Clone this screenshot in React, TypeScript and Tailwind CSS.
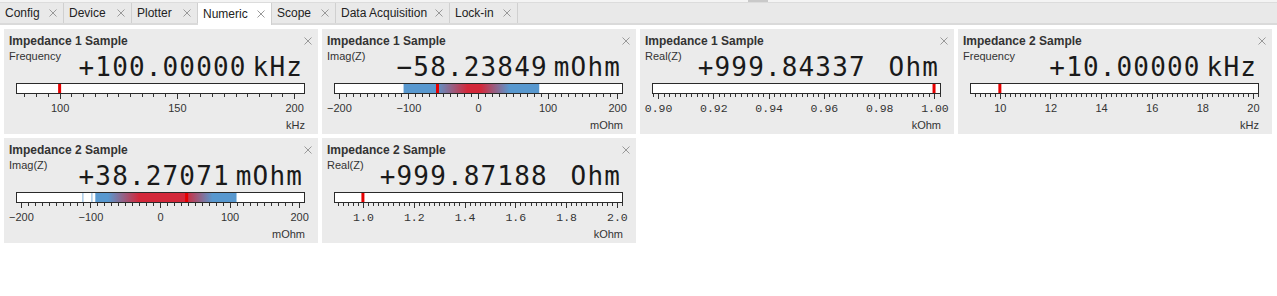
import React from 'react';

type Band = { from: number; to: number; stops: [number, string][]; ghosts?: number[] };

interface Meter {
  title: string;
  label: string;
  value: string;
  unit: string;
  scaleUnit: string;
  min: number;
  max: number;
  minor: number;
  majorEvery: number; // number of minor steps per labelled tick
  decimals: number;
  marker: number;
  mono?: boolean;
  band?: Band;
}

const BLUE = '#5898cf';
const RED = '#d3283a';

const tabs = [
  { name: 'Config', w: 'w-[64px]' },
  { name: 'Device', w: 'w-[68px]' },
  { name: 'Plotter', w: 'w-[66px]' },
  { name: 'Numeric', w: 'w-[74px]', active: true },
  { name: 'Scope', w: 'w-[64px]' },
  { name: 'Data Acquisition', w: 'w-[114px]' },
  { name: 'Lock-in', w: 'w-[68px]' },
];

const meters: Meter[] = [
  {
    title: 'Impedance 1 Sample', label: 'Frequency', value: '+100.00000', unit: 'kHz', scaleUnit: 'kHz',
    min: 81.4, max: 204.2, minor: 5, majorEvery: 10, decimals: 0, marker: 100,
  },
  {
    title: 'Impedance 1 Sample', label: 'Imag(Z)', value: '-58.23849', unit: 'mOhm', scaleUnit: 'mOhm',
    min: -207, max: 207, minor: 10, majorEvery: 10, decimals: 0, marker: -58.23849,
    band: {
      from: -107, to: 88,
      stops: [[0, BLUE], [0.24, BLUE], [0.47, RED], [0.57, RED], [0.78, BLUE], [1, BLUE]],
    },
  },
  {
    title: 'Impedance 1 Sample', label: 'Real(Z)', value: '+999.84337', unit: ' Ohm', scaleUnit: 'kOhm',
    min: 0.8978, max: 1.0020, minor: 0.002, majorEvery: 10, decimals: 2, marker: 0.99984337, mono: true,
  },
  {
    title: 'Impedance 2 Sample', label: 'Frequency', value: '+10.00000', unit: 'kHz', scaleUnit: 'kHz',
    min: 8.82, max: 20.2, minor: 0.2, majorEvery: 10, decimals: 0, marker: 10,
  },
  {
    title: 'Impedance 2 Sample', label: 'Imag(Z)', value: '+38.27071', unit: 'mOhm', scaleUnit: 'mOhm',
    min: -207, max: 207, minor: 10, majorEvery: 10, decimals: 0, marker: 38.27071,
    band: {
      from: -93, to: 110,
      stops: [[0, BLUE], [0.09, BLUE], [0.31, RED], [0.64, RED], [0.83, BLUE], [1, BLUE]],
      ghosts: [-112, -99],
    },
  },
  {
    title: 'Impedance 2 Sample', label: 'Real(Z)', value: '+999.87188', unit: ' Ohm', scaleUnit: 'kOhm',
    min: 0.886, max: 2.02, minor: 0.02, majorEvery: 10, decimals: 1, marker: 0.99987188, mono: true,
  },
];

function Cross({ size = 8, color = '#999999' }: { size?: number; color?: string }) {
  return (
    <svg width={size} height={size} viewBox="0 0 8 8" className="block shrink-0">
      <path d="M0.5 0.5 L7.5 7.5 M7.5 0.5 L0.5 7.5" stroke={color} strokeWidth="1" fill="none" />
    </svg>
  );
}

function Ruler({ m, id }: { m: Meter; id: string }) {
  const W = 289;
  const x = (v: number) => ((v - m.min) / (m.max - m.min)) * (W - 1);

  const ticks: { v: number; major: boolean }[] = [];
  const first = Math.ceil(m.min / m.minor - 1e-6);
  const last = Math.floor(m.max / m.minor + 1e-6);
  for (let i = first; i <= last; i++) {
    ticks.push({ v: i * m.minor, major: i % m.majorEvery === 0 });
  }

  const labelFont = m.mono ? "'Liberation Mono', monospace" : "'Liberation Sans', Arial, sans-serif";

  return (
    <svg width={W} height={32} className="block overflow-visible">
      {m.band && (
        <defs>
          <linearGradient id={id} x1="0" x2="1" y1="0" y2="0">
            {m.band.stops.map(([o, c], i) => (
              <stop key={i} offset={o} stopColor={c} />
            ))}
          </linearGradient>
        </defs>
      )}
      <rect x={0.5} y={0.5} width={W - 1} height={10} fill="#ffffff" stroke="#2a2a2a" />
      {m.band?.ghosts?.map((g) => (
        <rect key={g} x={x(g)} y={1} width={1.5} height={9} fill="#a9cbe8" />
      ))}
      {m.band && (
        <rect
          x={x(m.band.from)}
          y={1}
          width={x(m.band.to) - x(m.band.from)}
          height={9}
          fill={`url(#${id})`}
        />
      )}
      <rect x={x(m.marker) - 1.5} y={1} width={3} height={9} fill="#e60000" />
      {ticks.map((t, i) => {
        const tx = Math.round(x(t.v)) + 0.5;
        return <line key={i} x1={tx} x2={tx} y1={11} y2={t.major ? 16 : 14} stroke="#333" strokeWidth="1" />;
      })}
      {ticks
        .filter((t) => t.major)
        .map((t, i) => {
          const v = Math.abs(t.v) < 1e-9 ? 0 : t.v;
          const s = v.toFixed(m.decimals).replace('-', '\u2212');
          return (
            <text
              key={i}
              x={x(t.v) + 0.5}
              y={29}
              textAnchor="middle"
              fontSize={m.mono ? 11.5 : 11}
              fill="#333"
              style={{ fontFamily: labelFont }}
            >
              {s}
            </text>
          );
        })}
    </svg>
  );
}

function MeterCard({ m, idx }: { m: Meter; idx: number }) {
  return (
    <div className="h-[105px] bg-[#ebebeb] flex flex-col">
      <div className="flex items-center justify-between pl-[5px] pr-[6px] pt-[5px]">
        <span className="text-[12px] leading-[14px] font-bold text-[#333]">{m.title}</span>
        <Cross />
      </div>
      <div className="flex items-start justify-between pl-[5px] pr-[15px]">
        <span className="mt-[2px] text-[11px] leading-[13px] text-[#333]">{m.label}</span>
        <span className="mt-[6px] flex font-['DejaVu_Sans_Mono',monospace] text-[26px] leading-[26px] tracking-[1.15px] text-[#1a1a1a] whitespace-pre">
          <span>{m.value.replace('-', '\u2212')}</span>
          <span className="ml-[6px]">{m.unit}</span>
        </span>
      </div>
      <div className="pl-[12px] mt-[3px]">
        <Ruler m={m} id={`band-${idx}`} />
      </div>
      <div className="mt-[4px] pr-[13px] text-right text-[11px] leading-[13px] text-[#333]">{m.scaleUnit}</div>
    </div>
  );
}

export default function App() {
  return (
    <div className="w-[1277px] h-[296px] bg-white font-['Liberation_Sans',Arial,sans-serif] overflow-hidden">
      {/* Tab strip */}
      <div className="bg-[#e9e9e9]">
        <div className="h-[2px] bg-[#f4f4f4] flex">
          <div className="ml-[748px] w-[20px] bg-[#c9c9c9]" />
        </div>
        <div className="h-px bg-[#dcdcdc]" />
        <div className="flex h-[20px]">
          {tabs.map((t) => (
            <div
              key={t.name}
              className={`${t.w} flex items-center justify-between pl-[5px] pr-[6px] border-r border-[#d0d0d0] text-[12px] text-[#222] ${
                t.active ? 'h-[22px] bg-white relative z-10' : 'h-[20px]'
              }`}
            >
              <span>{t.name}</span>
              <Cross />
            </div>
          ))}
        </div>
        <div className="h-[2px] bg-[#dadada]" />
      </div>

      {/* Numeric meters */}
      <div className="grid grid-cols-[repeat(4,314px)] gap-[4px] px-[4px] pt-[4px]">
        {meters.map((m, i) => (
          <MeterCard key={i} m={m} idx={i} />
        ))}
      </div>
    </div>
  );
}
